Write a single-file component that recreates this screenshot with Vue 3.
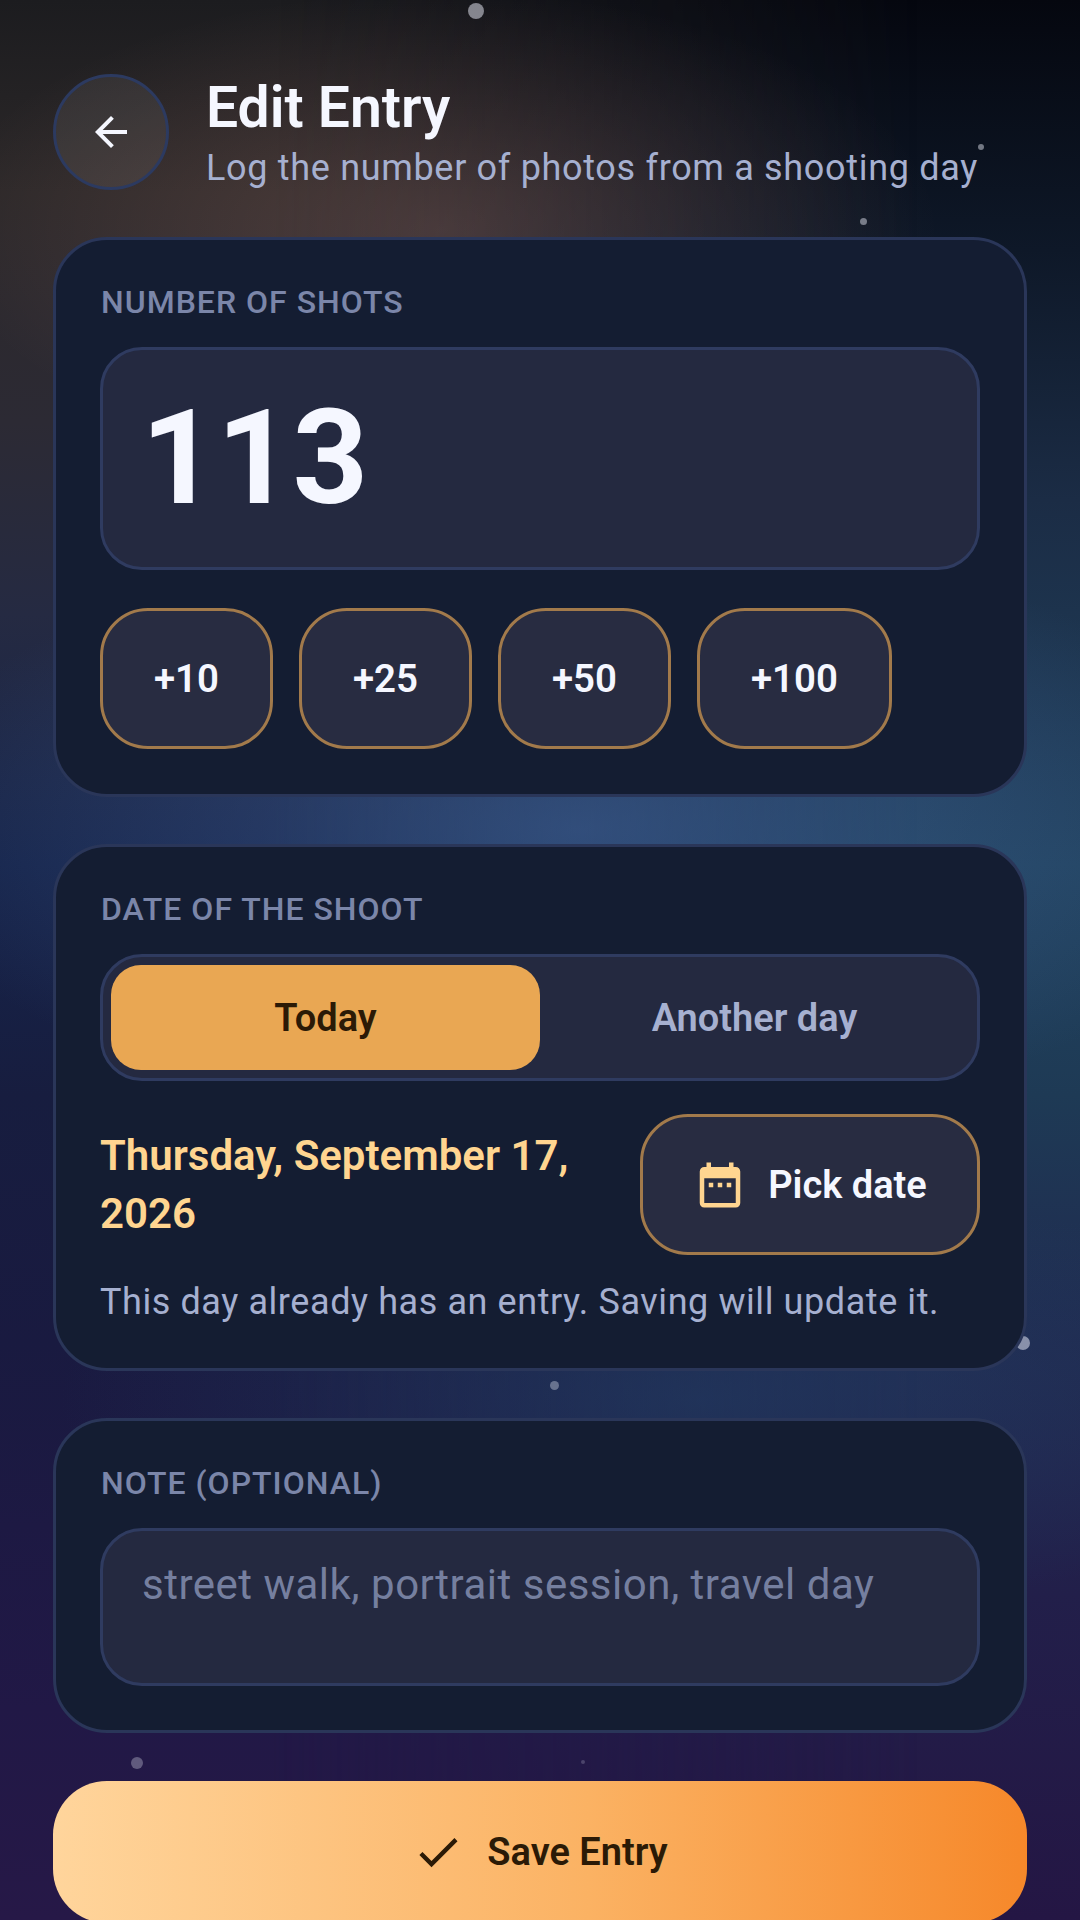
<template>
  <div class="page">
    <span
      v-for="(dot, index) in dots"
      :key="index"
      class="dot"
      :style="{ left: dot.x + 'px', top: dot.y + 'px', width: dot.size + 'px', height: dot.size + 'px', opacity: dot.alpha }"
    ></span>

    <header class="header">
      <button class="back">
        <svg width="48" height="48" viewBox="0 0 24 24" fill="#f5f7ff">
          <path d="M20 11H7.83l5.59-5.59L12 4l-8 8 8 8 1.41-1.41L7.83 13H20v-2z" />
        </svg>
      </button>
      <div class="heading">
        <h1>Edit Entry</h1>
        <p>Log the number of photos from a shooting day</p>
      </div>
    </header>

    <section class="card">
      <div class="label">NUMBER OF SHOTS</div>
      <div class="count">113</div>
      <div class="quick">
        <button v-for="step in steps" :key="step" class="chip">+{{ step }}</button>
      </div>
    </section>

    <section class="card">
      <div class="label">DATE OF THE SHOOT</div>
      <div class="toggle">
        <div class="toggle-item on">Today</div>
        <div class="toggle-item">Another day</div>
      </div>
      <div class="date-row">
        <div class="date-text">Thursday, September 17, 2026</div>
        <button class="pick">
          <svg width="54" height="54" viewBox="0 0 24 24" fill="#ffd590">
            <path d="M19 4h-1V2h-2v2H8V2H6v2H5c-1.1 0-2 .9-2 2v14c0 1.1.9 2 2 2h14c1.1 0 2-.9 2-2V6c0-1.1-.9-2-2-2zm0 16H5V9h14v11zM7 11h2v2H7zm4 0h2v2h-2zm4 0h2v2h-2z" />
          </svg>
          <span>Pick date</span>
        </button>
      </div>
      <p class="hint">This day already has an entry. Saving will update it.</p>
    </section>

    <section class="card">
      <div class="label">NOTE (OPTIONAL)</div>
      <div class="note">street walk, portrait session, travel day</div>
    </section>

    <button class="save">
      <svg width="52" height="52" viewBox="0 0 24 24" fill="#2b1a06">
        <path d="M9 16.17 4.83 12l-1.42 1.41L9 19 21 7l-1.41-1.41z" />
      </svg>
      <span>Save Entry</span>
    </button>
  </div>
</template>

<script setup>
const steps = [10, 25, 50, 100]

// specks floating over the background
const dots = [
  { x: 468, y: 3, size: 16, alpha: 0.5 },
  { x: 978, y: 144, size: 6, alpha: 0.45 },
  { x: 860, y: 218, size: 7, alpha: 0.45 },
  { x: 1016, y: 1336, size: 14, alpha: 0.5 },
  { x: 550, y: 1381, size: 9, alpha: 0.35 },
  { x: 131, y: 1757, size: 12, alpha: 0.3 },
  { x: 581, y: 1760, size: 4, alpha: 0.2 },
]
</script>

<style>
html,
body {
  margin: 0;
  background: #0b0f1e;
}
</style>

<style scoped>
.page {
  position: relative;
  isolation: isolate;
  box-sizing: border-box;
  width: 1080px;
  height: 1920px;
  overflow: hidden;
  padding: 74px 53px 0;
  display: flex;
  flex-direction: column;
  gap: 47px;
  font-family: Roboto, sans-serif;
  color: #f5f7ff;
  /* right edge colours run down the base */
  background: linear-gradient(180deg, #05070f 0%, #0e1828 13%, #1b2c45 26%, #21435f 45%, #1e3a55 57%, #202a50 70%, #221f4a 83%, #241644 100%);
}

/* left edge colours, faded out towards the right */
.page::before {
  content: "";
  position: absolute;
  inset: 0;
  z-index: -1;
  background: linear-gradient(180deg, #1c1c1f 0%, #2c2829 10%, #2c2a34 22%, #252a42 32%, #16244a 45%, #171d3f 57%, #191a40 70%, #211846 89%, #261847 100%);
  -webkit-mask-image: linear-gradient(90deg, #000 25%, transparent 85%);
  mask-image: linear-gradient(90deg, #000 25%, transparent 85%);
}

/* soft glows behind the cards */
.page::after {
  content: "";
  position: absolute;
  inset: 0;
  z-index: -1;
  background:
    radial-gradient(500px 240px at 440px 230px, rgba(255, 170, 150, 0.17), rgba(255, 170, 150, 0) 100%),
    radial-gradient(700px 300px at 580px 830px, rgba(64, 96, 150, 0.6), rgba(64, 96, 150, 0) 100%),
    radial-gradient(640px 220px at 700px 1400px, rgba(34, 62, 100, 0.6), rgba(34, 62, 100, 0) 100%);
}

.dot {
  position: absolute;
  border-radius: 50%;
  background: #f2f4ff;
}

.header {
  position: relative;
  display: flex;
  gap: 37px;
  height: 116px;
}

.back {
  box-sizing: border-box;
  width: 116px;
  height: 116px;
  flex: none;
  display: flex;
  align-items: center;
  justify-content: center;
  padding: 0;
  border: 3px solid #2c3a60;
  border-radius: 50%;
  background: rgba(255, 255, 255, 0.07);
}

.heading h1 {
  margin: 0;
  font-size: 57px;
  line-height: 68px;
  font-weight: 600;
}

.heading p {
  margin: 2px 0 0;
  font-size: 36px;
  line-height: 48px;
  letter-spacing: 0.68px;
  color: #a6b0d0;
  white-space: nowrap;
}

.card {
  position: relative;
  box-sizing: border-box;
  padding: 43px 44px 44px;
  border: 3px solid #2a3659;
  border-radius: 54px;
  background: #141d32;
}

.card:nth-of-type(1) {
  padding-bottom: 45px;
}

.card:nth-of-type(2) {
  padding-bottom: 43px;
}

.label {
  padding-left: 1px;
  font-size: 32px;
  line-height: 38px;
  font-weight: 500;
  letter-spacing: 1px;
  color: #7b86a9;
}

.count {
  box-sizing: border-box;
  height: 223px;
  margin-top: 26px;
  padding-left: 38px;
  border: 3px solid #2f3b60;
  border-radius: 42px;
  background: #242940;
  font-size: 132px;
  line-height: 217px;
  font-weight: 700;
}

.quick {
  display: flex;
  gap: 26px;
  margin-top: 38px;
}

.chip {
  box-sizing: border-box;
  min-width: 173px;
  height: 141px;
  padding: 0 51px;
  border: 3px solid #a27a4b;
  border-radius: 48px;
  background: #282c41;
  color: #f5f7ff;
  font-family: inherit;
  font-size: 38.4px;
  font-weight: 600;
}

.toggle {
  box-sizing: border-box;
  display: flex;
  height: 127px;
  margin-top: 26px;
  padding: 8px;
  border: 3px solid #2f3b60;
  border-radius: 42px;
  background: #242940;
}

.toggle-item {
  flex: 1;
  display: flex;
  align-items: center;
  justify-content: center;
  border-radius: 30px;
  font-size: 38px;
  font-weight: 600;
  color: #a6b0d0;
}

.toggle-item.on {
  background: #e9a753;
  color: #2b1a06;
}

.date-row {
  display: flex;
  align-items: center;
  justify-content: space-between;
  margin-top: 33px;
}

.date-text {
  width: 480px;
  font-size: 42px;
  line-height: 58px;
  font-weight: 600;
  color: #ffd590;
}

.pick {
  box-sizing: border-box;
  width: 340px;
  height: 141px;
  display: flex;
  align-items: center;
  justify-content: center;
  gap: 21px;
  padding: 0;
  border: 3px solid #a27a4b;
  border-radius: 48px;
  background: #282c41;
  color: #f5f7ff;
  font-family: inherit;
  font-size: 38px;
  font-weight: 600;
}

.hint {
  margin: 24px 0 0;
  font-size: 36px;
  line-height: 46px;
  letter-spacing: 0.58px;
  color: #a6b0d0;
}

.note {
  box-sizing: border-box;
  height: 158px;
  margin-top: 26px;
  padding: 28px 39px;
  border: 3px solid #2f3b60;
  border-radius: 42px;
  background: #242940;
  font-size: 42px;
  line-height: 52px;
  letter-spacing: 0.5px;
  color: #757f9f;
}

.save {
  position: relative;
  flex: none;
  height: 142px;
  margin-top: 1px;
  display: flex;
  align-items: center;
  justify-content: center;
  gap: 23px;
  padding: 0;
  border: 0;
  border-radius: 54px;
  background: linear-gradient(90deg, #ffd59c 0%, #fbb263 55%, #f6882a 100%);
  color: #2b1a06;
  font-family: inherit;
  font-size: 38px;
  font-weight: 600;
}
</style>
